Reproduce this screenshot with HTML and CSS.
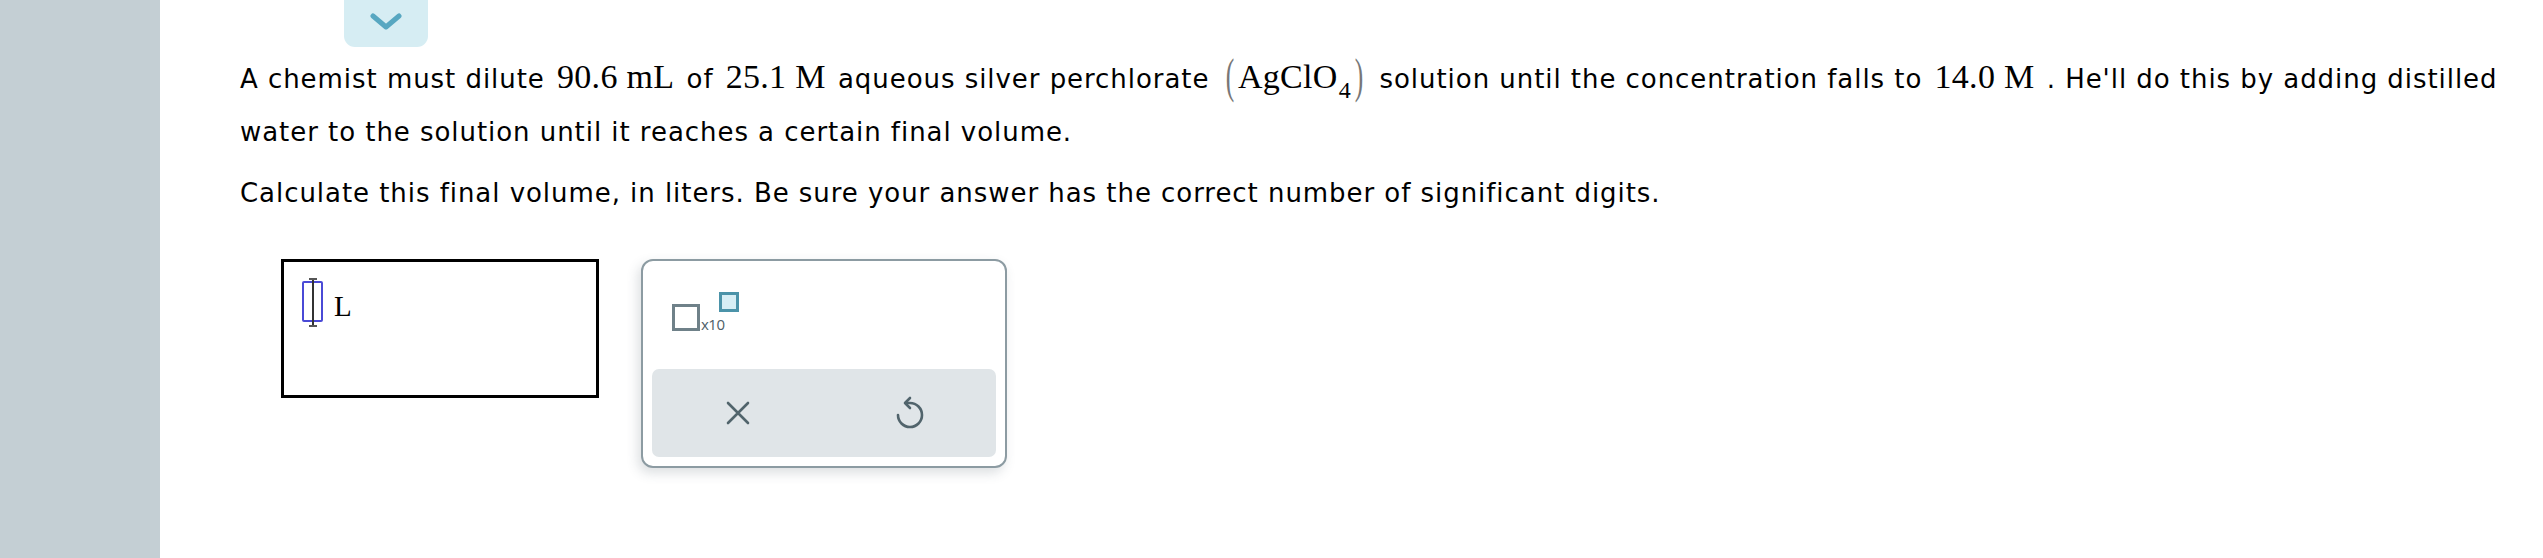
FILE: index.html
```html
<!DOCTYPE html>
<html lang="en">
<head>
<meta charset="utf-8">
<title>Dilution question</title>
<link rel="stylesheet" href="styles.css">
</head>
<body>
<div class="page">
  <aside class="sidebar"></aside>
  <main class="content">
    <div class="tab-row">
      <button class="tab" aria-label="Collapse">
        <svg width="34" height="18" viewBox="0 0 34 18"><path d="M4 3 L17 14 L30 3" fill="none" stroke="#57a7c1" stroke-width="5" stroke-linecap="round" stroke-linejoin="round"/></svg>
      </button>
    </div>
    <p class="q q1">A chemist must dilute <span class="m">90.6&nbsp;mL</span> of <span class="m">25.1&nbsp;M</span> aqueous silver perchlorate <span class="m chem"><span class="paren">(</span>AgClO<span class="sub">4</span><span class="paren">)</span></span> solution until the concentration falls to <span class="m">14.0&nbsp;M</span> . He'll do this by adding distilled water to the solution until it reaches a certain final volume.</p>
    <p class="q q2">Calculate this final volume, in liters. Be sure your answer has the correct number of significant digits.</p>
    <div class="answer-row">
      <div class="answer-box">
        <span class="slot"><span class="caret"></span></span>
        <span class="unit">L</span>
      </div>
      <div class="keypad">
        <div class="keys">
          <button class="key-x10" aria-label="scientific notation">
            <span class="big-sq"></span><span class="x10">x10</span><span class="small-sq"></span>
          </button>
        </div>
        <div class="actions">
          <button class="act" aria-label="Clear">
            <svg width="26" height="26" viewBox="0 0 26 26"><path d="M3 3 L23 23 M23 3 L3 23" stroke="#51646c" stroke-width="2.6" stroke-linecap="round" fill="none"/></svg>
          </button>
          <button class="act" aria-label="Undo">
            <svg width="30" height="34" viewBox="0 0 30 34"><path d="M11 7 H15 A12 12 0 1 1 3 19" stroke="#51646c" stroke-width="2.6" stroke-linecap="round" fill="none"/><path d="M15 2 L10 7 L15 12" stroke="#51646c" stroke-width="2.6" stroke-linecap="round" stroke-linejoin="round" fill="none"/></svg>
          </button>
        </div>
      </div>
    </div>
  </main>
</div>
</body>
</html>
```

FILE: styles.css
```css
* { box-sizing: border-box; }
html, body { margin: 0; padding: 0; background: #fff; }
body { font-family: "DejaVu Sans", Verdana, sans-serif; color: #000; }

.page {
  display: flex;
  height: 558px;
  overflow: hidden;
}

.sidebar {
  flex: 0 0 160px;
  background: #c4cfd4;
}

.content {
  flex: 1;
  padding-left: 80px;
  padding-right: 30px;
}

.tab-row {
  display: flex;
  padding-left: 104px;
}

.tab {
  width: 84px;
  height: 47px;
  border: 0;
  border-radius: 0 0 11px 11px;
  background: #d6edf3;
  display: flex;
  align-items: center;
  justify-content: center;
  padding: 0 0 4px 0;
}

.q {
  margin: 0;
  font-size: 26px;
  letter-spacing: 0.95px;
  line-height: 53px;
}

.q1 { margin-top: 6px; }
.q2 { margin-top: 8px; }

.m {
  font-family: "Liberation Serif", "Times New Roman", serif;
  font-size: 34px;
  letter-spacing: 0.3px;
  line-height: 1;
  margin: 0 3px;
}

.chem { white-space: nowrap; }

.paren {
  display: inline-block;
  color: #777;
  font-size: 30px;
  transform: scale(0.85, 1.6);
  transform-origin: 50% 62%;
  margin: 0 3px;
}

.sub {
  font-size: 24px;
  position: relative;
  top: 10px;
  margin-left: 1px;
}

.answer-row {
  display: flex;
  align-items: flex-start;
  margin-top: 39px;
  padding-left: 41px;
  gap: 42px;
}

.answer-box {
  width: 318px;
  height: 139px;
  border: 3px solid #000;
  display: flex;
  align-items: flex-start;
  padding: 19px 0 0 18px;
}

.slot {
  position: relative;
  width: 21px;
  height: 41px;
  border: 2px solid #4a4ad6;
  border-radius: 2px;
  display: block;
}

.caret {
  position: absolute;
  left: 8px;
  top: -5px;
  width: 2px;
  height: 49px;
  background: #333;
}
.caret::before, .caret::after {
  content: "";
  position: absolute;
  left: -3px;
  width: 8px;
  height: 2px;
  background: #555;
}
.caret::before { top: 0; }
.caret::after { bottom: 0; }

.unit {
  font-family: "Liberation Serif", "Times New Roman", serif;
  font-size: 29px;
  line-height: 1;
  margin-left: 11px;
  margin-top: 11px;
}

.keypad {
  width: 366px;
  height: 209px;
  border: 2px solid #8c9ba2;
  border-radius: 12px;
  background: #fff;
  box-shadow: -3px 5px 12px rgba(60, 80, 90, 0.18);
  display: flex;
  flex-direction: column;
  padding: 9px;
}

.keys {
  flex: 1;
  display: flex;
  align-items: flex-start;
  padding: 22px 0 0 20px;
}

.key-x10 {
  border: 0;
  background: transparent;
  padding: 0;
  display: flex;
  align-items: flex-start;
  height: 42px;
}

.big-sq {
  display: block;
  width: 28px;
  height: 27px;
  border: 3px solid #6f8189;
  margin-top: 12px;
}

.x10 {
  font-family: "Open Sans", "DejaVu Sans", sans-serif;
  font-size: 15px;
  color: #4e5e66;
  margin-top: 22px;
  margin-left: 1px;
  letter-spacing: -0.5px;
}

.small-sq {
  display: block;
  width: 20px;
  height: 20px;
  border: 3px solid #4b93a9;
  background: #d7eef5;
  margin-left: -6px;
}

.actions {
  height: 88px;
  background: #e0e5e8;
  border-radius: 7px;
  display: flex;
  align-items: center;
}

.act {
  flex: 1;
  border: 0;
  background: transparent;
  display: flex;
  align-items: center;
  justify-content: center;
  padding: 0;
  height: 100%;
}
```
